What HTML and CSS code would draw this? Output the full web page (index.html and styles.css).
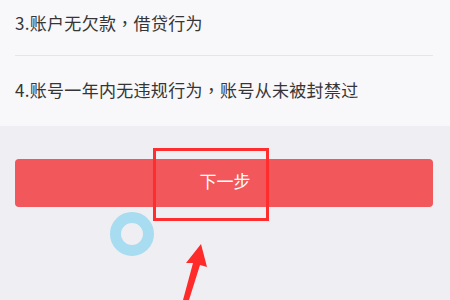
FILE: index.html
```html
<!DOCTYPE html>
<html lang="zh-CN">
<head>
<meta charset="utf-8">
<link rel="stylesheet" href="styles.css">
</head>
<body>
<div class="page">
  <ul class="list">
    <li class="item first">3.账户无欠款<span class="punct">，</span>借贷行为</li>
    <li class="item last">4.账号一年内无违规行为<span class="punct">，</span>账号从未被封禁过</li>
  </ul>
  <div class="actions">
    <button class="next">下一步</button>
  </div>
  <div class="mark-box"></div>
  <div class="touch-ring"></div>
  <svg class="arrow" width="40" height="60" viewBox="0 0 40 60">
    <polygon points="21,0 27,23 20,21 9,56 3,56 13,19 6,19" fill="#ff2a2a"/>
  </svg>
</div>
</body>
</html>
```
FILE: styles.css
```css
html, body {
  margin: 0;
  padding: 0;
}
body {
  background: #efeef2;
  font-family: "Noto Sans CJK SC", "Noto Sans", sans-serif;
}
.page {
  position: relative;
  width: 450px;
  height: 300px;
  overflow: hidden;
}
.list {
  list-style: none;
  margin: 0;
  padding: 0 17px 0 15px;
  background: #f8f7f9;
}
.item {
  font-size: 17px;
  letter-spacing: 0.3px;
  color: #353535;
  display: flex;
  align-items: center;
  line-height: 1;
}
.punct {
  font-family: "Noto Sans CJK TC", "Noto Sans CJK SC", sans-serif;
}
.item.first {
  height: 45px;
  padding-bottom: 10px;
  border-bottom: 1px solid #e6e5e9;
}
.item.last {
  height: 66px;
  padding-bottom: 4px;
}
.actions {
  padding: 33px 17px 0 15px;
}
.next {
  display: block;
  width: 100%;
  height: 48px;
  border: none;
  border-radius: 4px;
  background: #f2575b;
  color: #fff;
  font-family: "Noto Sans CJK SC", "Noto Sans", sans-serif;
  font-size: 17px;
  padding: 0 0 6px 2px;
}
.mark-box {
  position: absolute;
  left: 153px;
  top: 148px;
  width: 110px;
  height: 67px;
  border: 3px solid #ff2d2d;
}
.touch-ring {
  position: absolute;
  left: 110px;
  top: 212px;
  width: 22px;
  height: 22px;
  border: 11px solid #a7dcf1;
  border-radius: 50%;
}
.arrow {
  position: absolute;
  left: 180px;
  top: 244px;
}
```
